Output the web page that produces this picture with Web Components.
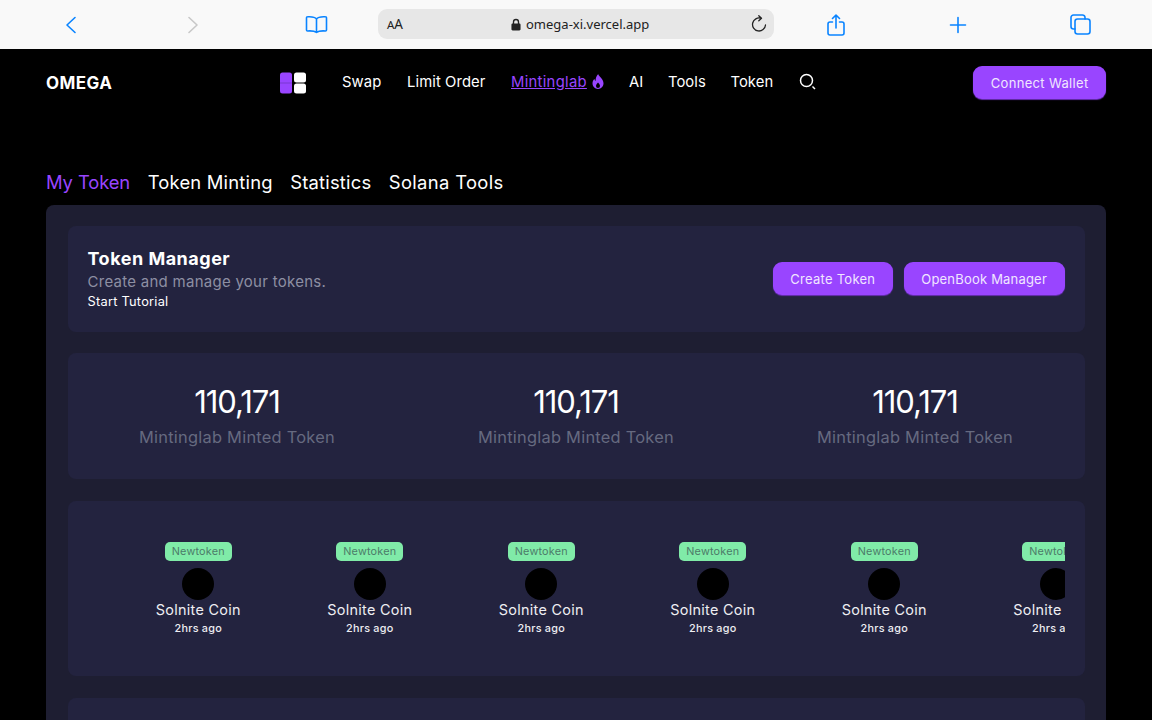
<!DOCTYPE html>
<html lang="en"><head><meta charset="utf-8"><title>Omega</title>
<style>
html,body{margin:0;height:720px;overflow:hidden;background:#000;color:#fff;font-family:Inter,"Noto Sans",sans-serif}
</style></head><body>
<browser-bar></browser-bar>
<site-nav></site-nav>
<main-tabs></main-tabs>
<panel-box>
  <manager-card></manager-card>
  <stats-card></stats-card>
  <token-strip></token-strip>
  <blank-card></blank-card>
</panel-box>
<script>
function def(name,html){customElements.define(name,class extends HTMLElement{constructor(){super();this.attachShadow({mode:'open'}).innerHTML=html}})}
const B='#0a84ff';
def('browser-bar',`<style>
:host{display:flex;align-items:center;height:49px;background:#f9f9f9}
svg{display:block;flex:none;fill:none;stroke:${B};stroke-width:1.6;stroke-linecap:round;stroke-linejoin:round}
.url{flex:none;width:396px;height:30px;margin-top:-1px;background:#e7e7e7;border-radius:9px;display:flex;align-items:center;box-sizing:border-box;padding:0 7px 0 9px;color:#222;font:13px "Noto Sans",sans-serif}
.aa{font-size:11.5px;width:124px}.aa b{font-weight:400;font-size:13.5px}
.lock{width:10px;height:13px;margin-right:5px;stroke:none;fill:#222}
.txt{flex:1;white-space:nowrap}
</style>
<svg width="12" height="18" viewBox="0 0 12 18" style="margin-left:65px"><path d="M10 1.500 2 9l8 7.500"/></svg>
<svg width="12" height="18" viewBox="0 0 12 18" style="margin-left:110px;stroke:#c8c8c8"><path d="M2 1.500 10 9l-8 7.500"/></svg>
<svg width="23" height="19" viewBox="0 0 23 19" style="margin-left:106px"><path d="M11.500 4C10 2 7 1.500 2.500 1.800c-.6 0-1 .4-1 1V15c0 .6.400 1 1 1 4-.3 7-.1 9 1.500 2-1.600 5-1.800 9-1.500.6 0 1-.4 1-1V2.800c0-.6-.4-1-1-1C16 1.500 13 2 11.500 4Zm0 0v13.500"/></svg>
<div class="url" style="margin-left:50px"><span class="aa">A<b>A</b></span>
<svg class="lock" viewBox="0 0 11 13"><path d="M2 5.500V3.800a3.500 3.500 0 0 1 7 0v1.700h.2c.7 0 1.300.5 1.300 1.200v5c0 .7-.6 1.300-1.300 1.300H1.800C1.100 13 .5 12.400.5 11.700v-5c0-.7.6-1.200 1.300-1.200Zm1.500 0h4V3.800a2 2 0 0 0-4 0Z"/></svg>
<span class="txt">omega-xi.vercel.app</span>
<svg width="16" height="18" viewBox="0 0 16 18" style="stroke:#222;stroke-width:1.300"><path d="M10 3.300A6.500 6.500 0 1 0 14.500 10M7.800.8l2.700 2.500-2.700 2.500"/></svg></div>
<svg width="18" height="22" viewBox="0 0 18 22" style="margin-left:53px"><path d="M5.500 8H3a2 2 0 0 0-2 2v9a2 2 0 0 0 2 2h12a2 2 0 0 0 2-2v-9a2 2 0 0 0-2-2h-2.500M9 14V1.500M5.500 4.500 9 1l3.500 3.500"/></svg>
<svg width="18" height="18" viewBox="0 0 18 18" style="margin-left:104px"><path d="M9 1.500v15M1.500 9h15"/></svg>
<svg width="21" height="21" viewBox="0 0 21 21" style="margin-left:103px"><path d="M5 15H3.500A2.500 2.500 0 0 1 1 12.500v-9A2.500 2.500 0 0 1 3.500 1h8.800A2.500 2.500 0 0 1 15 3.500V5"/><rect x="5" y="5" width="15" height="15" rx="2.500"/></svg>`);
def('site-nav',`<style>
:host{display:flex;align-items:center;height:67px;padding:0 46px;font-size:14.8px;letter-spacing:.1px}
.logo{font-weight:700;font-size:17px;width:234px;letter-spacing:.45px}
svg{display:block;flex:none}
nav{display:flex;align-items:center;margin:-2px 0 0 36px}
a{color:#fff;text-decoration:none;white-space:nowrap}
.on{color:#9945ff;text-decoration:underline;letter-spacing:.3px}
.btn{margin-left:auto;--ls:.33px}
</style>
<span class="logo">OMEGA</span>
<svg width="26" height="22" viewBox="0 0 26 22"><rect width="12" height="21" x="0" y=".5" rx="2.500" fill="#9945ff"/><path d="M0 11h12" stroke="#6e30bd" stroke-width=".7"/><rect x="14" y=".5" width="12" height="10" rx="2.500" fill="#fff"/><rect x="14" y="11.500" width="12" height="10" rx="2.500" fill="#fff"/></svg>
<nav><a style="width:65px">Swap</a><a style="width:104px">Limit Order</a><a class="on">Mintinglab</a>
<svg width="12" height="15" viewBox="0 0 12 15" style="margin:0 25px 0 5px"><path fill="#9945ff" fill-rule="evenodd" d="M6.200 0c.3 2.400 5.300 4.600 5.300 9.300C11.500 12.600 9 15 6 15S.5 12.600.5 9.300c0-1.800.8-3.300 2-4.300.1 1 .5 1.600 1.100 2C3.500 4.500 4.400 1.800 6.200 0ZM6 8.500c-.8 1-2 2-2 3.400a2 2 0 0 0 4 0c0-1.400-1.200-2.400-2-3.400Z"/></svg>
<a style="width:39px">AI</a><a style="width:62.500px">Tools</a><a style="width:68.500px">Token</a>
<svg width="18" height="18" viewBox="0 0 18 18" fill="none" stroke="#fff" stroke-width="1.500"><circle cx="7.500" cy="7.500" r="6"/><path d="m13.500 13.500 2.500 2.500"/></svg></nav>
<pill-btn class="btn">Connect Wallet</pill-btn>`);
def('pill-btn',`<style>
:host{display:inline-flex;align-items:center;justify-content:center;height:33px;padding:0 17.500px;background:#9945ff;border-radius:9px;color:#f0e6ff;font-size:13px;white-space:nowrap;box-shadow:0 1px 1px #6a2fb5;letter-spacing:var(--ls,.2px)}
</style><slot></slot>`);
def('main-tabs',`<style>
:host{display:flex;gap:17.500px;padding:53px 46px 0;height:36px;font-size:18.400px;line-height:26px;letter-spacing:.2px}
.on{color:#9945ff;letter-spacing:-.1px}
.s{letter-spacing:.34px}
</style><span class="on">My Token</span><span>Token Minting</span><span>Statistics</span><span class="s">Solana Tools</span>`);
def('panel-box',`<style>
:host{display:flex;flex-direction:column;gap:21px;margin:0 46px;padding:21px 21.500px;background:#1e1e32;border-radius:8px 8px 0 0}
</style><slot></slot>`);
const card='display:block;background:#23233f;border-radius:8px;';
def('manager-card',`<style>
:host{${card}display:flex;align-items:center;justify-content:space-between;height:106px;padding:0 20px;box-sizing:border-box}
h2{margin:0;font-size:18px;font-weight:700;line-height:24px;letter-spacing:.5px}
p{margin:0;font-size:15px;line-height:22px;color:#8d8fa3;letter-spacing:.27px}
small{display:block;font-size:12.800px;line-height:17px;letter-spacing:.25px;margin-bottom:2px}
div.b{display:flex;gap:11px;margin-top:-1px}
</style><div><h2>Token Manager</h2><p>Create and manage your tokens.</p><small>Start Tutorial</small></div>
<div class="b"><pill-btn style="--ls:.26px">Create Token</pill-btn><pill-btn>OpenBook Manager</pill-btn></div>`);
def('stat-item',`<style>
:host{display:flex;flex-direction:column;align-items:center}
b{font-weight:400;font-size:31px;line-height:42px;letter-spacing:-1.100px}
span{font-size:16.400px;line-height:28px;color:#666a80;letter-spacing:.25px}
</style><b>110,171</b><span>Mintinglab Minted Token</span>`);
def('stats-card',`<style>
:host{${card}display:grid;grid-template-columns:repeat(3,1fr);height:126px;align-items:center}
</style><stat-item></stat-item><stat-item></stat-item><stat-item></stat-item>`);
def('token-item',`<style>
:host{flex:none;width:171.500px;display:flex;flex-direction:column;align-items:center}
.tag{height:19px;padding:0 7px;background:#80eba8;color:#4c7a68;border-radius:5px;font-size:10.800px;line-height:19px;letter-spacing:.22px}
i{display:block;width:32px;height:32px;border-radius:50%;background:#000;margin-top:7px}
.n{font-size:14.400px;line-height:20px;color:#eeeef2;white-space:nowrap;letter-spacing:.3px}
.t{font-size:10.800px;font-weight:500;line-height:17px;color:#eeeef2;white-space:nowrap;letter-spacing:.25px}
</style><span class="tag">Newtoken</span><i></i><span class="n">Solnite Coin</span><span class="t">2hrs ago</span>`);
def('token-strip',`<style>
:host{${card}display:block;height:175px;margin-top:1px;padding:41px 20px 0;box-sizing:border-box}
div{display:flex;overflow:hidden;padding-left:25px;height:110px}
</style><div><token-item></token-item><token-item></token-item><token-item></token-item><token-item></token-item><token-item></token-item><token-item></token-item></div>`);
def('blank-card',`<style>:host{${card}height:80px;margin-top:1px}</style>`);
</script>
</body></html>
